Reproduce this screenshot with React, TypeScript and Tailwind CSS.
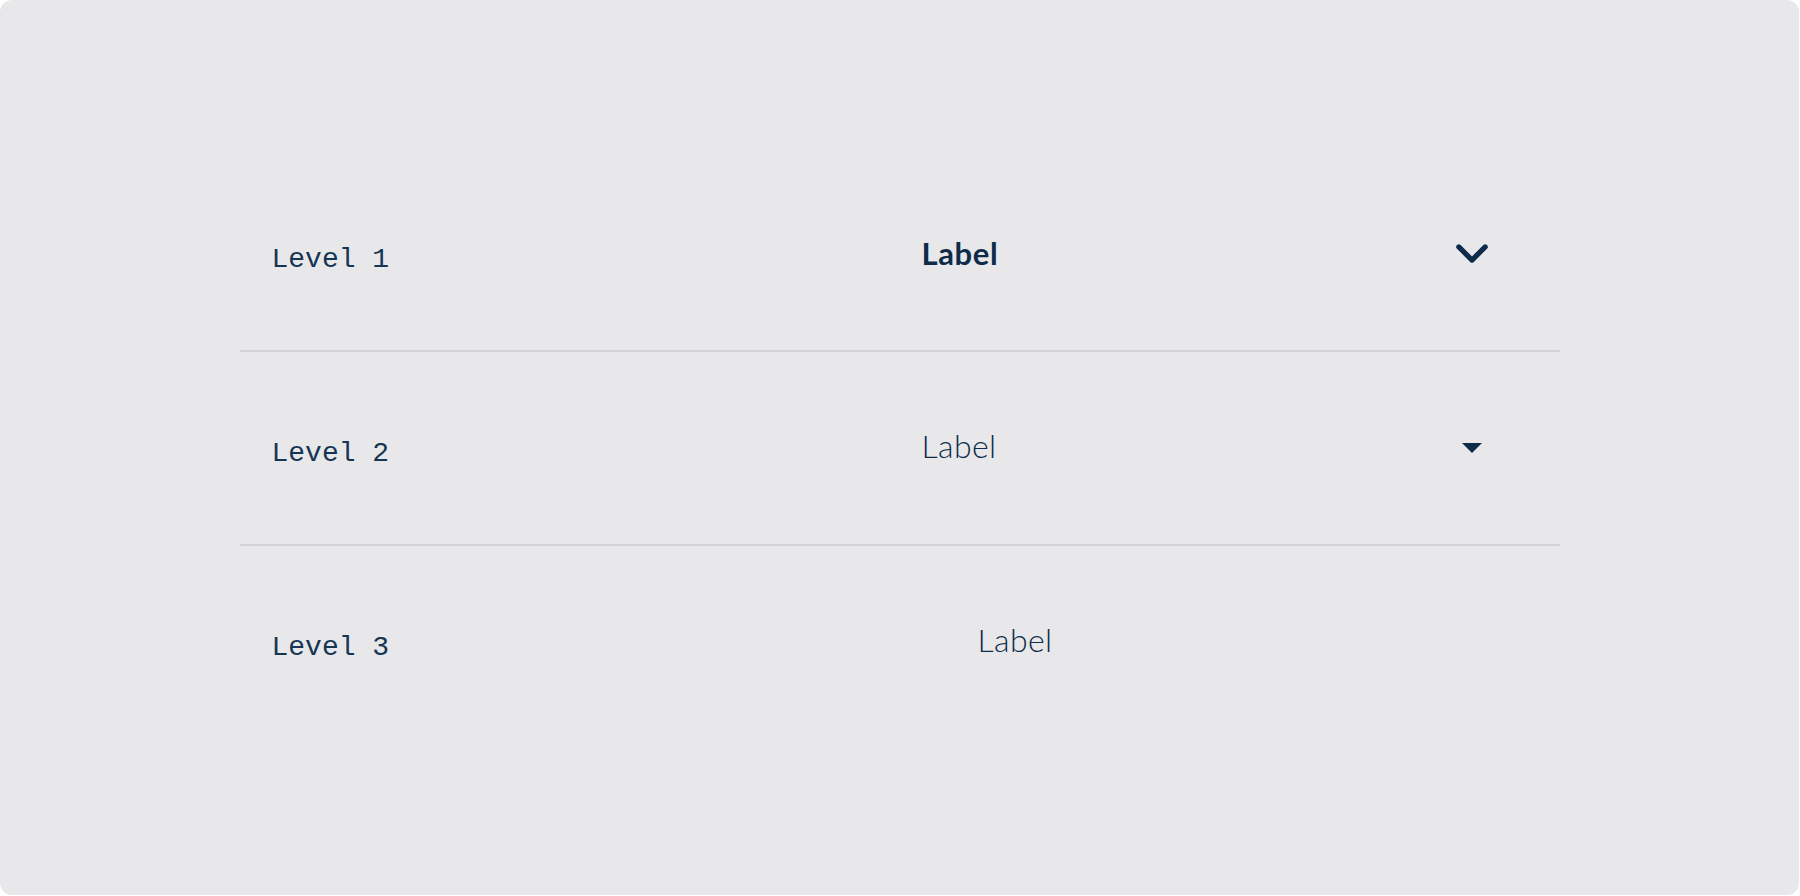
import { ReactNode } from 'react'

interface MenuRowProps {
  level: string
  label: string
  weight: 'bold' | 'light'
  indent?: boolean
  icon?: ReactNode
}

function Chevron() {
  return (
    <svg width="34" height="22" viewBox="0 0 34 22" fill="none">
      <path d="M3 3.5 L17 17.5 L31 3.5" stroke="#0e2c4a" strokeWidth="5.5" strokeLinecap="round" strokeLinejoin="round" />
    </svg>
  )
}

function Caret() {
  return (
    <svg width="20" height="10" viewBox="0 0 20 10">
      <path d="M0 0 H20 L10 10 Z" fill="#0e2c4a" />
    </svg>
  )
}

function MenuRow({ level, label, weight, indent, icon }: MenuRowProps) {
  return (
    <div className="flex h-[192px] items-center pl-8 pr-[72px]">
      {/* Level name */}
      <div className="w-[650px] shrink-0 pt-[13px] font-['Liberation_Mono','Courier_New',monospace] text-[28px] text-[#163553]">
        {level}
      </div>

      {/* Label */}
      <div className={`flex-1 ${indent ? 'pl-[56px]' : ''} ${weight === 'light' ? 'pb-[4px]' : ''}`}>
        <span
          className={
            weight === 'bold'
              ? "font-['Lato',sans-serif] text-[31px] font-bold tracking-[0.6px] text-[#0e2c4a]"
              : "font-['Lato',sans-serif] text-[32px] font-light tracking-[0.4px] text-[#0e2c4a]"
          }
        >
          {label}
        </span>
      </div>

      {/* Trailing icon */}
      <div className="flex w-8 items-center justify-center">{icon}</div>
    </div>
  )
}

export default function App() {
  return (
    <div className="h-[896px] w-[1800px] bg-white">
      <div className="flex h-[895px] w-[1799px] items-center justify-center rounded-xl bg-[#e8e8ea]">
        <div className="w-[1320px]">
          <MenuRow level="Level 1" label="Label" weight="bold" icon={<Chevron />} />
          <div className="h-[2px] bg-[#d2d2d5]" />
          <MenuRow level="Level 2" label="Label" weight="light" icon={<Caret />} />
          <div className="h-[2px] bg-[#d2d2d5]" />
          <MenuRow level="Level 3" label="Label" weight="light" indent />
        </div>
      </div>
    </div>
  )
}
